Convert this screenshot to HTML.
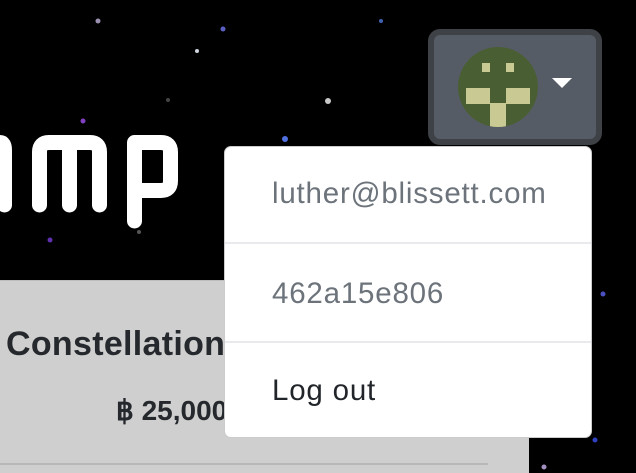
<!DOCTYPE html>
<html><head><style>
html,body{margin:0;padding:0;}
body{width:636px;height:472px;background:#000;position:relative;overflow:hidden;font-family:"Liberation Sans",Arial,sans-serif;}
.panel{position:absolute;left:0;top:280px;width:529px;height:192px;background:#cfcfcf;border-top:1px solid #bdbdbd;}
.panel .line{position:absolute;left:0;top:182px;width:488px;height:2px;background:#b8b8b8;}
.t1{position:absolute;left:6px;top:325px;font-size:34px;font-weight:bold;color:#25282c;letter-spacing:0.3px;white-space:nowrap;}
.t2{position:absolute;left:116px;top:394px;font-size:28px;font-weight:bold;color:#25282c;white-space:nowrap;}
.btn{position:absolute;left:428px;top:29px;width:162px;height:104px;border:6px solid #3e4146;border-radius:12px;background:#565c65;}
.dd{position:absolute;left:224px;top:146px;width:368px;height:292px;background:#fff;border-radius:7px;border:1px solid #ccc;box-sizing:border-box;}
.it{position:absolute;left:47px;font-size:29.5px;letter-spacing:0.8px;white-space:nowrap;}
.hr{position:absolute;left:0;width:100%;height:2px;background:#e9e9ee;}
</style></head><body>
<svg width="636" height="472" style="position:absolute;left:0;top:0">
<g fill="#888">
<circle cx="98" cy="21" r="2.5" fill="#9a8fb0"/><circle cx="197" cy="51" r="2" fill="#cfd3dd"/><circle cx="223" cy="29" r="2.5" fill="#5960c0"/>
<circle cx="168" cy="100" r="2" fill="#444"/><circle cx="328" cy="101" r="3" fill="#c8c8c8"/><circle cx="381" cy="21" r="2" fill="#4060b0"/>
<circle cx="83" cy="121" r="2.5" fill="#8040c0"/><circle cx="285" cy="139" r="3" fill="#5070e0"/><circle cx="50" cy="240" r="2.5" fill="#6030b0"/>
<circle cx="139" cy="232" r="2" fill="#555"/><circle cx="603" cy="294" r="2.5" fill="#4a50c0"/><circle cx="595" cy="440" r="2.5" fill="#3040c0"/><circle cx="544" cy="467" r="2.5" fill="#a090c0"/>
</g>
<g stroke="#fff" stroke-width="15" fill="none" stroke-linecap="round" stroke-linejoin="round">
<path d="M-20 142.5 H0 Q4.5 142.5 4.5 150 V205"/>
<path d="M39.5 205 V152 Q39.5 142.5 49 142.5 H90 Q99.5 142.5 99.5 152 V205 M69.5 142.5 V205"/>
<path d="M134.5 221 V142.5 H161 Q170.5 142.5 170.5 152 V181 Q170.5 190.5 161 190.5 H134.5"/>
</g>
</svg>
<div class="panel"><div class="line"></div></div>
<div class="t1">Constellation</div>
<div class="t2">฿ 25,000</div>
<div class="btn"></div>
<svg width="636" height="472" style="position:absolute;left:0;top:0">
<defs><clipPath id="c"><circle cx="498" cy="87" r="40"/></clipPath></defs>
<circle cx="498" cy="87" r="40" fill="#4a5e34"/>
<g clip-path="url(#c)" fill="#c8c993">
<rect x="482" y="63" width="8" height="9"/><rect x="506" y="63" width="8" height="9"/>
<rect x="466" y="88" width="24" height="16"/><rect x="506" y="88" width="24" height="16"/>
<rect x="490" y="103" width="16" height="30"/>
</g>
<path d="M552 78 H572 L562 88 Z" fill="#fff"/>
</svg>
<div class="dd">
<div class="it" style="top:30px;color:#6c737b">luther@blissett.com</div>
<div class="hr" style="top:95px"></div>
<div class="it" style="top:130px;color:#6c737b">462a15e806</div>
<div class="hr" style="top:194px"></div>
<div class="it" style="top:227px;color:#212529">Log out</div>
</div>
</body></html>
